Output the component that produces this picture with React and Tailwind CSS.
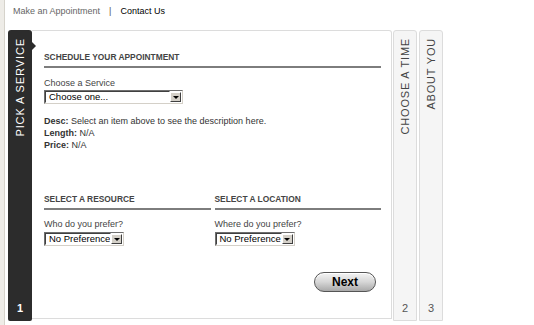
import React from "react";

const font = { fontFamily: '"Liberation Sans", Arial, sans-serif' };

const FakeSelect = ({ label, width }) => {
  return (
    <div
      className={`flex h-[14px] items-stretch border border-t-[#6f6f6f] border-l-[#6f6f6f] border-b-[#d4d0c8] border-r-[#d4d0c8] bg-white ${width}`}
    >
      <div className="flex flex-1 items-center overflow-hidden whitespace-nowrap border border-t-[#404040] border-l-[#404040] border-b-white border-r-white pl-[3px] text-[9.5px] leading-none text-black">
        {label}
      </div>
      <div className="my-[1px] mr-[1px] flex w-[11px] items-center justify-center border border-t-white border-l-white border-b-[#404040] border-r-[#404040] bg-[#d4d0c8]">
        <span className="block h-0 w-0 border-x-[3px] border-t-[3px] border-x-transparent border-t-black" />
      </div>
    </div>
  );
};

const SideTab = ({ title, number }) => {
  return (
    <div className="flex h-full w-[24px] flex-col items-center justify-between rounded-t-[3px] border border-[#dcdcdc] bg-[#f5f5f5] pt-[7px] pb-[6px]">
      <span className="rotate-180 text-[11px] leading-none tracking-[0.8px] text-[#444] [writing-mode:vertical-rl]">
        {title}
      </span>
      <span className="text-[11px] leading-none text-[#555]">{number}</span>
    </div>
  );
};

export default function App() {
  return (
    <div className="flex h-[325px] w-[534px] bg-white" style={font}>
      <div className="h-full w-[5px] border-r border-[#d6d3cb] bg-[#eeece7]" />

      <div className="flex flex-col pl-[3px]">
        <div className="flex h-[30px] items-start pl-[5px] pt-[6px] text-[9px] leading-[11px]">
          <span className="text-[#666]">Make an Appointment</span>
          <span className="px-[9px] text-[#555]">|</span>
          <span className="text-black">Contact Us</span>
        </div>

        <div className="flex h-[291px] items-stretch">
          {/* active tab */}
          <div className="relative flex h-full w-[24px] flex-col items-center justify-between rounded-t-[3px] rounded-b-[2px] bg-[#2c2c2c] pt-[8px] pb-[7px]">
            <span className="rotate-180 text-[11px] leading-none tracking-[0.9px] text-white [writing-mode:vertical-rl]">
              PICK A SERVICE
            </span>
            <span className="text-[11px] font-bold leading-none text-white">1</span>
            <span className="absolute top-[12px] right-[-4px] h-0 w-0 border-y-[4px] border-l-[4px] border-y-transparent border-l-[#2c2c2c]" />
          </div>

          {/* main panel */}
          <div className="flex h-[289px] w-[360px] flex-col rounded-tr-[3px] border border-l-0 border-[#dcdcdc] pl-[12px] pr-[10px] text-[9px] text-[#333]">
            <div className="mt-[21px] border-b-2 border-[#7d7d7d] pb-[3px] text-[8.4px] font-bold leading-[11px] text-[#444]">
              SCHEDULE YOUR APPOINTMENT
            </div>

            <div className="mt-[10px] leading-[10px] text-[#444]">Choose a Service</div>
            <div className="mt-[2px]">
              <FakeSelect label="Choose one..." width="w-[139px]" />
            </div>

            <div className="mt-[11px] leading-[12px] text-[#333]">
              <div>
                <b>Desc:</b> Select an item above to see the description here.
              </div>
              <div>
                <b>Length:</b> N/A
              </div>
              <div>
                <b>Price:</b> N/A
              </div>
            </div>

            <div className="mt-[43px] grid grid-cols-2 gap-x-[4px]">
              <div className="flex flex-col">
                <div className="border-b-2 border-[#7d7d7d] pb-[3px] text-[8.4px] font-bold leading-[11px] text-[#444]">
                  SELECT A RESOURCE
                </div>
                <div className="mt-[9px] leading-[10px] text-[#444]">Who do you prefer?</div>
                <div className="mt-[3px]">
                  <FakeSelect label="No Preference" width="w-[80px]" />
                </div>
              </div>
              <div className="flex flex-col">
                <div className="border-b-2 border-[#7d7d7d] pb-[3px] text-[8.4px] font-bold leading-[11px] text-[#444]">
                  SELECT A LOCATION
                </div>
                <div className="mt-[9px] leading-[10px] text-[#444]">Where do you prefer?</div>
                <div className="mt-[3px]">
                  <FakeSelect label="No Preference" width="w-[80px]" />
                </div>
              </div>
            </div>

            <div className="mt-[26px] flex justify-end pr-[5px]">
              <button className="h-[20px] w-[62px] rounded-full border border-[#555] bg-gradient-to-b from-[#f4f4f4] via-[#d6d6d6] to-[#a9a9a9] text-[12px] font-bold leading-none text-black shadow-[inset_0_1px_0_#fff]">
                Next
              </button>
            </div>
          </div>

          <div className="ml-[1px] h-full">
            <SideTab title="CHOOSE A TIME" number="2" />
          </div>
          <div className="ml-[2px] h-full">
            <SideTab title="ABOUT YOU" number="3" />
          </div>
        </div>
      </div>
    </div>
  );
}
